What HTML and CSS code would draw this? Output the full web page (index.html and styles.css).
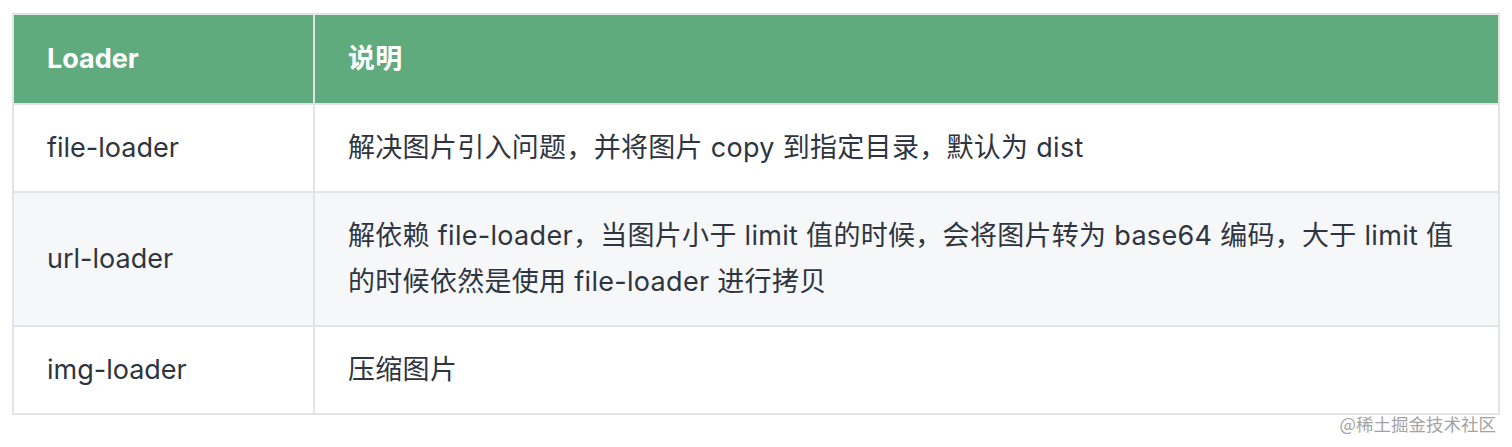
FILE: index.html
```html
<!DOCTYPE html>
<html lang="zh">
<head>
<meta charset="utf-8">
<link rel="stylesheet" href="styles.css">
</head>
<body>
<div class="page">
  <table class="loader-table">
    <thead>
      <tr><th class="col-name">Loader</th><th class="col-desc">说明</th></tr>
    </thead>
    <tbody>
      <tr><td>file-loader</td><td class="col-desc">解决图片引入问题，并将图片 copy 到指定目录，默认为 dist</td></tr>
      <tr class="alt"><td>url-loader</td><td class="col-desc">解依赖 file-loader，当图片小于 limit 值的时候，会将图片转为 base64 编码，大于 limit 值的时候依然是使用 file-loader 进行拷贝</td></tr>
      <tr><td>img-loader</td><td class="col-desc">压缩图片</td></tr>
    </tbody>
  </table>
  <div class="watermark">@稀土掘金技术社区</div>
</div>
</body>
</html>
```
FILE: styles.css
```css
html, body {
  margin: 0;
  padding: 0;
  background: #fff;
}
.page {
  padding: 13px 12px 0 12px;
  width: 1489px;
}
.loader-table {
  border-collapse: collapse;
  width: 1488px;
  font-family: "Inter", "Noto Sans CJK SC", sans-serif;
  font-size: 27px;
  color: #2f3540;
}
.loader-table th,
.loader-table td {
  border: 2px solid #e1e3e6;
  text-align: left;
  vertical-align: middle;
  line-height: 46px;
  padding: 20px 30px 20px 33px;
}
.loader-table .col-desc {
  padding-right: 42px;
  letter-spacing: 0.3px;
}
.loader-table th {
  background: #5fab7e;
  color: #fff;
  font-weight: 700;
  height: 48px;
}
.loader-table .col-name {
  width: 236px;
}
.loader-table .alt td {
  background: #f6f7f9;
}
.watermark {
  text-align: right;
  font-family: "Noto Sans CJK SC", sans-serif;
  font-size: 17.5px;
  line-height: 22px;
  color: #a3a3a3;
  padding-right: 5px;
  margin-top: -2px;
}
```
